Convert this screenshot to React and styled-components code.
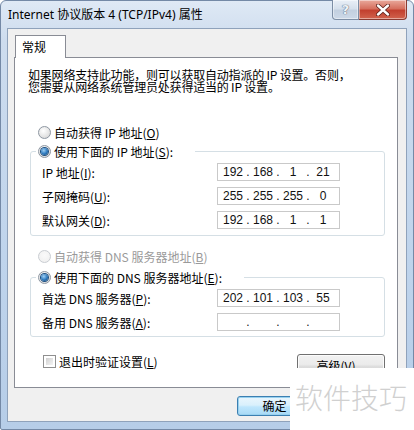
import React from 'react';
import styled, { createGlobalStyle } from 'styled-components';

const GlobalStyle = createGlobalStyle`
	html, body {
		margin: 0;
		padding: 0;
	}
	body {
		width: 414px;
		height: 430px;
		overflow: hidden;
		background: #fff;
		font-family: "Noto Sans CJK SC", sans-serif;
		font-size: 12px;
		color: #000;
	}
`;

const Window = styled.div`
	position: relative;
	box-sizing: border-box;
	width: 414px;
	height: 430px;
	display: flex;
	flex-direction: column;
	padding: 0 6px 7px 6px;
	border: 1px solid #7489a6;
	border-radius: 6px 6px 2px 2px;
	background: linear-gradient(#dfe9f5, #cddcee 40px, #bfd4ec 60%, #b6cde8);
`;

const TitleBar = styled.div`
	height: 27px;
	display: flex;
	align-items: flex-start;
	justify-content: space-between;
`;

const Title = styled.div`
	padding-left: 1px;
	line-height: 27px;
	font-family: "Noto Sans", "Noto Sans CJK SC", sans-serif;
	font-size: 12px;
	color: #000;
`;

const Caption = styled.div`
	display: flex;
	margin-top: -1px;
`;

const CapButton = styled.div`
	box-sizing: border-box;
	height: 20px;
	width: ${({ wide }) => (wide ? '48px' : '27px')};
	display: flex;
	align-items: center;
	justify-content: center;
	border: 1px solid ${({ danger }) => (danger ? '#8a3b32' : '#7d8ea5')};
	border-top: none;
	border-left: ${({ danger }) => (danger ? 'none' : '1px solid #7d8ea5')};
	border-radius: ${({ danger }) => (danger ? '0 0 4px 0' : '0 0 0 4px')};
	background: ${({ danger }) =>
		danger
			? 'linear-gradient(#e9a99c, #d6705f 45%, #c2402f 55%, #d1634e)'
			: 'linear-gradient(#e9eff7, #d6e0ec 45%, #c3d0e0 55%, #cdd9e8)'};
	box-shadow: inset 0 0 0 1px rgba(255, 255, 255, 0.45);
`;

const HelpGlyph = styled.span`
	font-family: "DejaVu Sans", sans-serif;
	font-weight: bold;
	font-size: 13px;
	color: #eef2f7;
	text-shadow: 0 0 1px #56647a, 0 0 1px #56647a;
`;

const Client = styled.div`
	flex: 1;
	display: flex;
	flex-direction: column;
	background: #f0f0f0;
	border: 1px solid #8fa2bb;
	padding: 6px 8px 0 6px;
`;

const TabStrip = styled.div`
	display: flex;
	padding-left: 1px;
`;

const Tab = styled.div`
	position: relative;
	z-index: 1;
	box-sizing: border-box;
	width: 51px;
	height: 23px;
	margin-bottom: -1px;
	padding: 3px 0 0 6px;
	line-height: 16px;
	background: #fff;
	border: 1px solid #898c95;
	border-bottom: none;
`;

const Panel = styled.div`
	box-sizing: border-box;
	height: 331px;
	display: flex;
	flex-direction: column;
	padding: 11px 12px 0 13px;
	background: #fff;
	border: 1px solid #898c95;
`;

const Intro = styled.p`
	margin: 0;
	line-height: 12px;
	white-space: nowrap;
	letter-spacing: -0.2px;
`;

const OptionRow = styled.label`
	display: flex;
	align-items: center;
	height: 18px;
	margin-top: ${({ gap }) => gap}px;
	margin-left: 10px;
	gap: 3px;
	color: ${({ disabled }) => (disabled ? '#9a9a9a' : '#000')};
`;

const Radio = styled.span`
	box-sizing: border-box;
	width: 13px;
	height: 13px;
	border-radius: 50%;
	display: flex;
	align-items: center;
	justify-content: center;
	border: 1px solid ${({ disabled }) => (disabled ? '#c9cdd2' : '#8e97a2')};
	background: ${({ disabled }) =>
		disabled
			? 'radial-gradient(circle at 50% 40%, #fafafa, #eeeeee)'
			: 'radial-gradient(circle at 40% 35%, #ffffff, #e6e6e6 55%, #cfcfcf)'};

	&::after {
		content: '';
		display: ${({ checked }) => (checked ? 'block' : 'none')};
		width: 7px;
		height: 7px;
		border-radius: 50%;
		background: radial-gradient(circle at 40% 35%, #9fd0f5, #2b78bd 55%, #16416e);
		box-shadow: 0 0 0 1px #1d4f80;
	}
`;

const Group = styled.fieldset`
	margin: ${({ gap }) => gap}px 0 0 2px;
	padding: 3px 11px ${({ bottom }) => bottom}px 11px;
	border: 1px solid #d5dfe5;
	border-radius: 3px;
	min-width: 0;
`;

const Legend = styled.legend`
	display: flex;
	align-items: center;
	gap: 3px;
	height: 18px;
	margin-left: -6px;
	padding: 0 22px 0 2px;
`;

const Fields = styled.div`
	display: grid;
	grid-template-columns: 175px 123px;
	grid-auto-rows: 18px;
	row-gap: 6px;
	align-items: center;
`;

const IpBox = styled.div`
	box-sizing: border-box;
	height: 18px;
	display: grid;
	grid-template-columns: 24px 6px 24px 6px 24px 6px 24px;
	padding-left: 3px;
	align-items: center;
	border: 1px solid #c9c9c9;
	background: #fff;
	font-family: "Liberation Sans", sans-serif;
	font-size: 12px;
	line-height: 16px;
	color: #111;
`;

const Octet = styled.span`
	text-align: center;
`;

const Dot = styled.span`
	text-align: center;
`;

const BottomRow = styled.div`
	display: flex;
	align-items: center;
	justify-content: space-between;
	margin-top: 17px;
	padding-left: 15px;
`;

const CheckLabel = styled.label`
	display: flex;
	align-items: center;
	gap: 3px;
	margin-top: -9px;
`;

const Checkbox = styled.span`
	box-sizing: border-box;
	width: 13px;
	height: 13px;
	border: 1px solid #8f8f8f;
	background: #fff;
	padding: 2px;

	&::after {
		content: '';
		display: block;
		width: 100%;
		height: 100%;
		background: linear-gradient(135deg, #d0d0d0, #f4f4f4);
	}
`;

const Button = styled.button`
	box-sizing: border-box;
	width: ${({ w }) => w}px;
	height: ${({ h }) => h}px;
	padding: 0;
	font-family: "Noto Sans CJK SC", sans-serif;
	font-size: 12px;
	line-height: 14px;
	color: #000;
	border-radius: 3px;
	border: 1px solid ${({ primary }) => (primary ? '#3c7fb1' : '#707070')};
	background: ${({ primary }) =>
		primary
			? 'linear-gradient(#eaf6fd, #d9f0fc 45%, #bee6fd 55%, #a7d9f5)'
			: 'linear-gradient(#f2f2f2, #ebebeb 45%, #dddddd 55%, #cfcfcf)'};
	box-shadow: inset 0 0 0 1px ${({ primary }) => (primary ? '#98d1ef' : '#fcfcfc')};
`;

const Footer = styled.div`
	display: flex;
	justify-content: flex-end;
	margin-top: 8px;
	padding-right: 86px;
`;

const Watermark = styled.div`
	position: absolute;
	right: -1px;
	bottom: -1px;
	width: 124px;
	height: 62px;
	padding-left: 5px;
	box-sizing: border-box;
	background: #fff;
	font-family: "Noto Sans CJK SC", sans-serif;
	font-weight: 300;
	font-size: 28px;
	line-height: 58px;
	color: #d0d0d0;
	white-space: nowrap;
`;

const CloseIcon = () => (
	<svg width="14" height="12" viewBox="0 0 14 12">
		<path
			d="M2 1.5 L12 10.5 M12 1.5 L2 10.5"
			stroke="#5a1e18"
			strokeWidth="4"
			strokeLinecap="round"
		/>
		<path
			d="M2 1.5 L12 10.5 M12 1.5 L2 10.5"
			stroke="#ffffff"
			strokeWidth="2.4"
			strokeLinecap="round"
		/>
	</svg>
);

const IpField = ({ value }) => {
	const parts = value ? value.split('.') : ['', '', '', ''];
	return (
		<IpBox>
			<Octet>{parts[0]}</Octet>
			<Dot>.</Dot>
			<Octet>{parts[1]}</Octet>
			<Dot>.</Dot>
			<Octet>{parts[2]}</Octet>
			<Dot>.</Dot>
			<Octet>{parts[3]}</Octet>
		</IpBox>
	);
};

const Key = ({ label, k, colon }) => (
	<span>
		{label}(<u>{k}</u>){colon ? ':' : ''}
	</span>
);

const App = () => {
	return (
		<>
			<GlobalStyle />
			<Window>
				<TitleBar>
					<Title>Internet 协议版本 4 (TCP/IPv4) 属性</Title>
					<Caption>
						<CapButton>
							<HelpGlyph>?</HelpGlyph>
						</CapButton>
						<CapButton wide danger>
							<CloseIcon />
						</CapButton>
					</Caption>
				</TitleBar>
				<Client>
					<TabStrip>
						<Tab>常规</Tab>
					</TabStrip>
					<Panel>
						<Intro>
							如果网络支持此功能，则可以获取自动指派的 IP 设置。否则，
							<br />
							您需要从网络系统管理员处获得适当的 IP 设置。
						</Intro>

						<OptionRow gap={30}>
							<Radio />
							<Key label="自动获得 IP 地址" k="O" />
						</OptionRow>
						<Group gap={1} bottom={6}>
							<Legend>
								<Radio checked />
								<Key label="使用下面的 IP 地址" k="S" colon />
							</Legend>
							<Fields>
								<Key label="IP 地址" k="I" colon />
								<IpField value="192.168.1.21" />
								<Key label="子网掩码" k="U" colon />
								<IpField value="255.255.255.0" />
								<Key label="默认网关" k="D" colon />
								<IpField value="192.168.1.1" />
							</Fields>
						</Group>

						<OptionRow gap={11} disabled>
							<Radio disabled />
							<Key label="自动获得 DNS 服务器地址" k="B" />
						</OptionRow>
						<Group gap={3} bottom={5}>
							<Legend>
								<Radio checked />
								<Key label="使用下面的 DNS 服务器地址" k="E" colon />
							</Legend>
							<Fields>
								<Key label="首选 DNS 服务器" k="P" colon />
								<IpField value="202.101.103.55" />
								<Key label="备用 DNS 服务器" k="A" colon />
								<IpField />
							</Fields>
						</Group>

						<BottomRow>
							<CheckLabel>
								<Checkbox />
								<Key label="退出时验证设置" k="L" />
							</CheckLabel>
							<Button w={88} h={23}>
								高级(<u>V</u>)...
							</Button>
						</BottomRow>
					</Panel>
					<Footer>
						<Button primary w={75} h={20}>
							确定
						</Button>
					</Footer>
				</Client>
				<Watermark>软件技巧</Watermark>
			</Window>
		</>
	);
};

export default App;
